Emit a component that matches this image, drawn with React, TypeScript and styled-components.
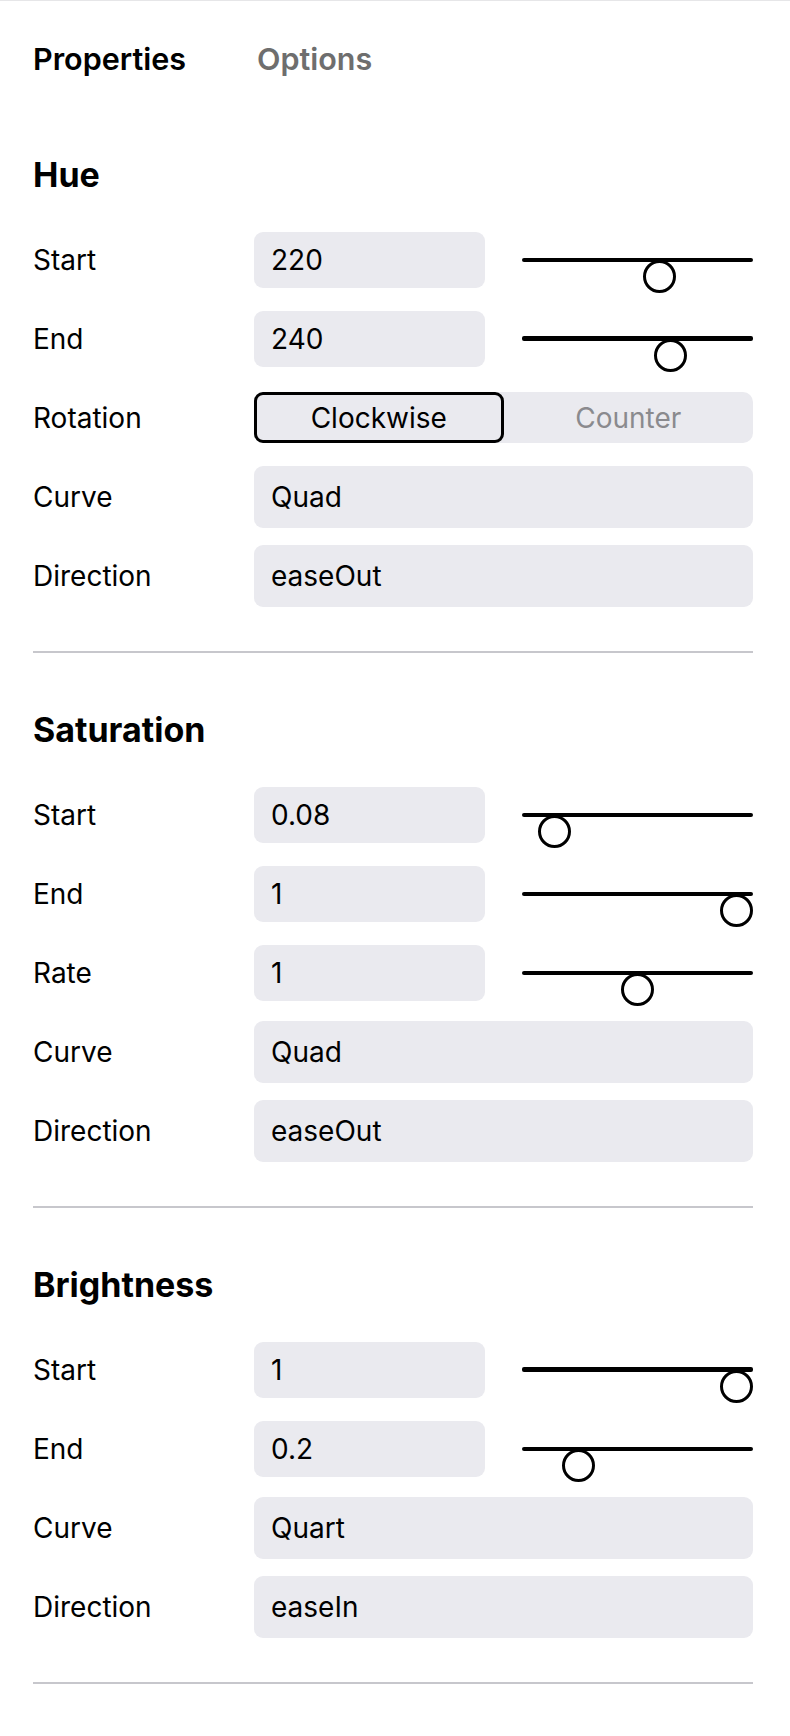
import React from "react";
import styled, { createGlobalStyle } from "styled-components";

const GlobalStyle = createGlobalStyle`
  html, body {
    margin: 0;
    padding: 0;
    background: #ffffff;
  }
  body {
    font-family: Inter, "Noto Sans", sans-serif;
    color: #000000;
    -webkit-font-smoothing: antialiased;
  }
`;

type SliderRow = { kind: "slider"; label: string; value: string; frac: number; heavy?: boolean };
type FieldRow = { kind: "field"; label: string; value: string };
type SegmentRow = { kind: "segment"; label: string; options: string[]; selected: number };
type Row = SliderRow | FieldRow | SegmentRow;

const sections: { title: string; rows: Row[] }[] = [
	{
		title: "Hue",
		rows: [
			{ kind: "slider", label: "Start", value: "220", frac: 220 / 360 },
			{ kind: "slider", label: "End", value: "240", frac: 240 / 360, heavy: true },
			{ kind: "segment", label: "Rotation", options: ["Clockwise", "Counter"], selected: 0 },
			{ kind: "field", label: "Curve", value: "Quad" },
			{ kind: "field", label: "Direction", value: "easeOut" },
		],
	},
	{
		title: "Saturation",
		rows: [
			{ kind: "slider", label: "Start", value: "0.08", frac: 0.08 },
			{ kind: "slider", label: "End", value: "1", frac: 1 },
			{ kind: "slider", label: "Rate", value: "1", frac: 0.5 },
			{ kind: "field", label: "Curve", value: "Quad" },
			{ kind: "field", label: "Direction", value: "easeOut" },
		],
	},
	{
		title: "Brightness",
		rows: [
			{ kind: "slider", label: "Start", value: "1", frac: 1, heavy: true },
			{ kind: "slider", label: "End", value: "0.2", frac: 0.2 },
			{ kind: "field", label: "Curve", value: "Quart" },
			{ kind: "field", label: "Direction", value: "easeIn" },
		],
	},
];

const THUMB = 33;

const Slider = ({ frac, heavy }: { frac: number; heavy?: boolean }) => (
	<Track $weight={heavy ? 5 : 4}>
		<Thumb style={{ left: `calc((100% - ${THUMB}px) * ${frac})` }} />
	</Track>
);

const App = () => {
	return (
		<Root>
			<GlobalStyle />
			<TabBar>
				<Tab $active>Properties</Tab>
				<Tab>Options</Tab>
			</TabBar>
			<Content>
				{sections.map((section) => (
					<Section key={section.title}>
						<SectionTitle>{section.title}</SectionTitle>
						<Grid>
							{section.rows.map((row, idx) => (
								<React.Fragment key={idx}>
									<Label>{row.label}</Label>
									{row.kind === "slider" && (
										<>
											<ValueBox>{row.value}</ValueBox>
											<Slider frac={row.frac} heavy={row.heavy} />
										</>
									)}
									{row.kind === "field" && <ValueBox $wide>{row.value}</ValueBox>}
									{row.kind === "segment" && (
										<Segmented>
											{row.options.map((opt, i) => (
												<Segment key={opt} $active={i === row.selected}>
													{opt}
												</Segment>
											))}
										</Segmented>
									)}
								</React.Fragment>
							))}
						</Grid>
						<Divider />
					</Section>
				))}
			</Content>
		</Root>
	);
};

export default App;

const Root = styled.div`
	width: 790px;
	min-height: 1736px;
	background: #ffffff;
`;

const TabBar = styled.div`
	display: flex;
	gap: 71px;
	border-top: 1px solid #e6e6e8;
	padding: 40px 33px 21px;
`;

const Tab = styled.div<{ $active?: boolean }>`
	font-size: 30.5px;
	font-weight: 600;
	line-height: 36px;
	color: ${({ $active }) => ($active ? "#000000" : "#6e6e6e")};
`;

const Content = styled.div`
	padding: 0 37px 0 33px;
`;

const Section = styled.section`
	padding-top: 57px;
`;

const SectionTitle = styled.h2`
	margin: 0 0 25px;
	font-size: 34px;
	font-weight: 700;
	line-height: 40px;
`;

const Grid = styled.div`
	display: grid;
	grid-template-columns: 184px 1fr 1fr;
	grid-auto-rows: 79px;
	column-gap: 37px;
	align-items: center;
`;

const Label = styled.div`
	font-size: 28px;
	line-height: 34px;
`;

const ValueBox = styled.div<{ $wide?: boolean }>`
	grid-column: ${({ $wide }) => ($wide ? "span 2" : "auto")};
	height: ${({ $wide }) => ($wide ? "62px" : "56px")};
	display: flex;
	align-items: center;
	padding: 0 17px;
	background: #eaeaef;
	border-radius: 9px;
	font-size: 28px;
	line-height: 34px;
`;

const Segmented = styled.div`
	grid-column: span 2;
	height: 51px;
	display: grid;
	grid-template-columns: 1fr 1fr;
	background: #eaeaef;
	border-radius: 10px;
`;

const Segment = styled.div<{ $active?: boolean }>`
	display: flex;
	align-items: center;
	justify-content: center;
	box-sizing: border-box;
	border: 3px solid ${({ $active }) => ($active ? "#000000" : "transparent")};
	border-radius: 9px;
	font-size: 28px;
	color: ${({ $active }) => ($active ? "#000000" : "#8a8a8e")};
`;

const Track = styled.div<{ $weight: number }>`
	position: relative;
	height: ${({ $weight }) => $weight}px;
	&::after {
		content: "";
		position: absolute;
		inset: 0;
		background: #000000;
		border-radius: 2px;
		z-index: 2;
	}
`;

const Thumb = styled.div`
	position: absolute;
	top: 50%;
	width: ${THUMB}px;
	height: ${THUMB}px;
	box-sizing: border-box;
	border: 3px solid #000000;
	border-radius: 50%;
	background: #ffffff;
	z-index: 1;
`;

const Divider = styled.div`
	height: 2px;
	margin-top: 36px;
	background: #c7c7cc;
`;
